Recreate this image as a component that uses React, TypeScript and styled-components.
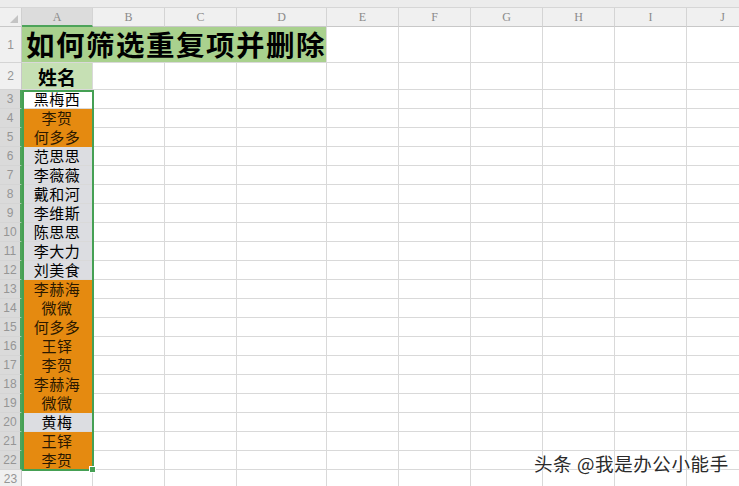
import React from "react";
import styled, { createGlobalStyle } from "styled-components";

const Global = createGlobalStyle`
  html, body { margin: 0; padding: 0; background: #fff; overflow: hidden; }
  * { box-sizing: border-box; }
`;

const Page = styled.div`
  position: relative;
  width: 739px;
  height: 486px;
  overflow: hidden;
  background: #fff;
  font-family: "Noto Sans CJK SC", "Liberation Sans", sans-serif;
`;

const TopStrip = styled.div`
  height: 8px;
  background: #ececec;
  border-bottom: 1px solid #d6d6d6;
`;

const Sheet = styled.div`
  display: grid;
  grid-template-columns: 22px 71px 72px 72px 90px 72px 72px 72px 72px 72px 72px;
  grid-template-rows: 19px 36px 27px repeat(21, 19px);
`;

const Corner = styled.div`
  background: #f0f0f0;
  border-right: 1px solid #d0d0d0;
  border-bottom: 1px solid #c8c8c8;
  position: relative;
  &::after {
    content: "";
    position: absolute;
    right: 3px;
    bottom: 3px;
    width: 0;
    height: 0;
    border-left: 8px solid transparent;
    border-bottom: 8px solid #c4c4c4;
  }
`;

const ColHeader = styled.div<{ $active?: boolean }>`
  display: flex;
  align-items: center;
  justify-content: center;
  background: ${(p) => (p.$active ? "#dcdcdc" : "#f0f0f0")};
  border-right: 1px solid #d4d4d4;
  border-bottom: ${(p) => (p.$active ? "2px solid #4da35a" : "1px solid #c8c8c8")};
  color: #8a8a8a;
  font-family: "Liberation Serif", serif;
  font-size: 12px;
  padding-top: 1px;
`;

const RowHeader = styled.div<{ $active?: boolean }>`
  display: flex;
  align-items: center;
  justify-content: center;
  background: ${(p) => (p.$active ? "#dadada" : "#f0f0f0")};
  border-bottom: 1px solid #d4d4d4;
  border-right: ${(p) => (p.$active ? "2px solid #4da35a" : "1px solid #c8c8c8")};
  color: #959595;
  font-family: "Liberation Sans", sans-serif;
  font-size: 12px;
`;

const Cell = styled.div<{ $bg?: string }>`
  background: ${(p) => p.$bg || "#fff"};
  border-right: 1px solid #d9d9d9;
  border-bottom: 1px solid #d9d9d9;
`;

const TitleCell = styled.div`
  grid-column: span 4;
  display: flex;
  align-items: center;
  padding-left: 4px;
  background: #a9d18e;
  border-right: 1px solid #d9d9d9;
  border-bottom: 1px solid #d9d9d9;
  color: #000;
  font-size: 28.5px;
  font-weight: 700;
  letter-spacing: 1.5px;
  white-space: nowrap;
  line-height: 1;
`;

const HeadCell = styled.div`
  display: flex;
  align-items: center;
  justify-content: center;
  background: #c6e0b4;
  border-right: 1px solid #d9d9d9;
  border-bottom: 1px solid #d9d9d9;
  color: #000;
  font-size: 19px;
  font-weight: 700;
  line-height: 1;
  padding-top: 1px;
`;

const NameCell = styled.div<{ $bg: string }>`
  display: flex;
  align-items: center;
  justify-content: center;
  background: ${(p) => p.$bg};
  border-right: 1px solid #d9d9d9;
  border-bottom: 1px solid ${(p) => (p.$bg === "#e58a10" ? "#e58a10" : "#d9d9d9")};
  color: ${(p) => (p.$bg === "#e58a10" ? "#2a1800" : "#000")};
  font-size: 15px;
  line-height: 16px;
  letter-spacing: 0.5px;
  white-space: nowrap;
`;

const Selection = styled.div`
  position: absolute;
  left: 22px;
  top: 90px;
  width: 72px;
  height: 381px;
  border: 2px solid #45a054;
  pointer-events: none;
  &::after {
    content: "";
    position: absolute;
    right: -4px;
    bottom: -4px;
    width: 5px;
    height: 5px;
    background: #45a054;
    border: 1px solid #fff;
  }
`;

const Watermark = styled.div`
  position: absolute;
  left: 534px;
  top: 450px;
  color: #2a2a2a;
  font-size: 18.5px;
  letter-spacing: 0.6px;
  white-space: nowrap;
  text-shadow: 0 0 2px #fff, 0 0 3px #fff;
  font-family: "Noto Sans CJK SC", "Liberation Sans", sans-serif;
`;

const ORANGE = "#e58a10";
const GRAY = "#dcdde1";
const WHITE = "#ffffff";

const names: [string, string][] = [
  ["黑梅西", WHITE],
  ["李贺", ORANGE],
  ["何多多", ORANGE],
  ["范思思", GRAY],
  ["李薇薇", GRAY],
  ["戴和河", GRAY],
  ["李维斯", GRAY],
  ["陈思思", GRAY],
  ["李大力", GRAY],
  ["刘美食", GRAY],
  ["李赫海", ORANGE],
  ["微微", ORANGE],
  ["何多多", ORANGE],
  ["王铎", ORANGE],
  ["李贺", ORANGE],
  ["李赫海", ORANGE],
  ["微微", ORANGE],
  ["黄梅", GRAY],
  ["王铎", ORANGE],
  ["李贺", ORANGE],
];

const cols = ["A", "B", "C", "D", "E", "F", "G", "H", "I", "J"];

function EmptyCells({ count, row }: { count: number; row: number }) {
  return (
    <>
      {Array.from({ length: count }).map((_, i) => (
        <Cell key={`e-${row}-${i}`} />
      ))}
    </>
  );
}

export default function App() {
  return (
    <>
      <Global />
      <Page>
        <TopStrip />
        <Sheet>
          <Corner />
          {cols.map((c) => (
            <ColHeader key={c} $active={c === "A"}>
              {c}
            </ColHeader>
          ))}

          <RowHeader>1</RowHeader>
          <TitleCell>如何筛选重复项并删除</TitleCell>
          <EmptyCells count={6} row={1} />

          <RowHeader>2</RowHeader>
          <HeadCell>姓名</HeadCell>
          <EmptyCells count={9} row={2} />

          {names.map(([n, bg], i) => (
            <React.Fragment key={i}>
              <RowHeader $active>{i + 3}</RowHeader>
              <NameCell $bg={bg}>{n}</NameCell>
              <EmptyCells count={9} row={i + 3} />
            </React.Fragment>
          ))}

          <RowHeader>23</RowHeader>
          <EmptyCells count={10} row={23} />
        </Sheet>
        <Selection />
        <Watermark>头条 @我是办公小能手</Watermark>
      </Page>
    </>
  );
}
